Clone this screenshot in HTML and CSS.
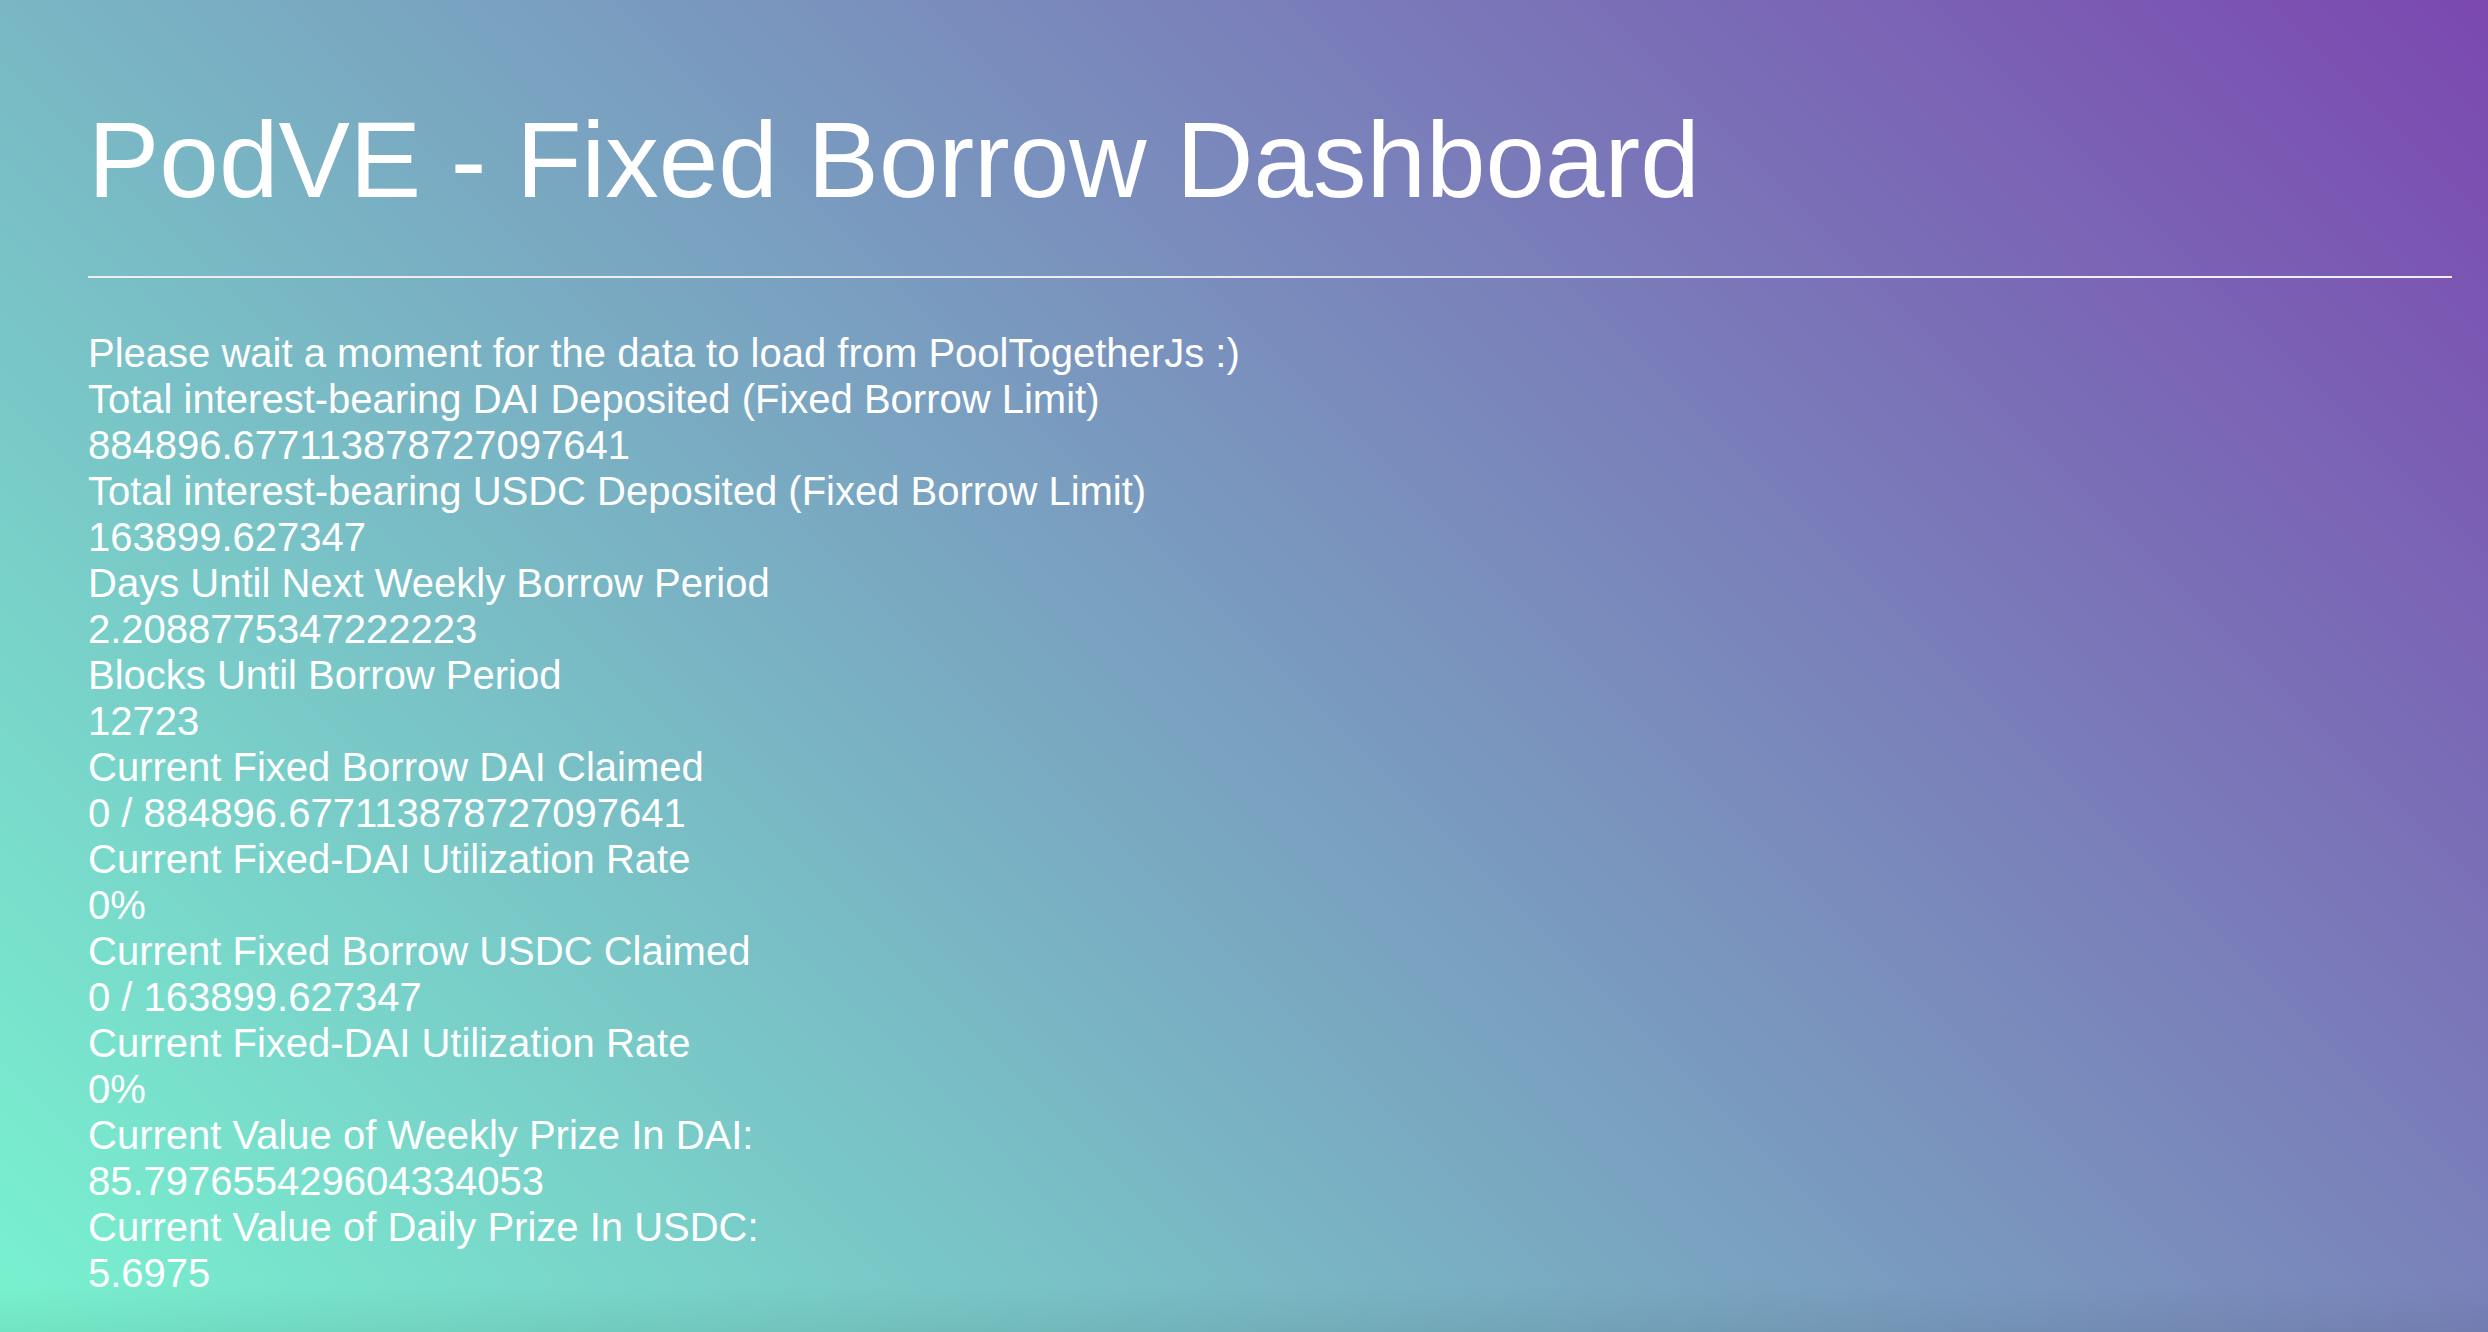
FILE: index.html
```html
<!DOCTYPE html>
<html lang="en">
<head>
<meta charset="utf-8">
<meta name="viewport" content="width=device-width, initial-scale=1">
<title>PodVE - Fixed Borrow Dashboard</title>
<link rel="stylesheet" href="styles.css">
</head>
<body>
<main class="dashboard">
<h1 class="title">PodVE - Fixed Borrow Dashboard</h1>
<hr class="divider">
<p class="notice">Please wait a moment for the data to load from PoolTogetherJs :)</p>
<dl class="stats">
<dt>Total interest-bearing DAI Deposited (Fixed Borrow Limit)</dt><dd>884896.677113878727097641</dd>
<dt>Total interest-bearing USDC Deposited (Fixed Borrow Limit)</dt><dd>163899.627347</dd>
<dt>Days Until Next Weekly Borrow Period</dt><dd>2.2088775347222223</dd>
<dt>Blocks Until Borrow Period</dt><dd>12723</dd>
<dt>Current Fixed Borrow DAI Claimed</dt><dd>0 / 884896.677113878727097641</dd>
<dt>Current Fixed-DAI Utilization Rate</dt><dd>0%</dd>
<dt>Current Fixed Borrow USDC Claimed</dt><dd>0 / 163899.627347</dd>
<dt>Current Fixed-DAI Utilization Rate</dt><dd>0%</dd>
<dt>Current Value of Weekly Prize In DAI:</dt><dd>85.797655429604334053</dd>
<dt>Current Value of Daily Prize In USDC:</dt><dd>5.6975</dd>
</dl>
</main>
</body>
</html>
```

FILE: styles.css
```css
html {
  min-height: 100%;
  background:
    linear-gradient(to top, rgba(0, 0, 0, 0.06), transparent 48px) no-repeat,
    linear-gradient(45deg, #78f3cf 0%, #7b48b0 100%) no-repeat;
}

body {
  margin: 0;
  color: #fff;
  font: 40px/46px Arial, "Liberation Sans", sans-serif;
}

.dashboard {
  padding: 96px 36px 24px 88px;
}

.title {
  margin: 0;
  font-size: 107px;
  font-weight: 400;
  line-height: 128px;
}

.divider {
  height: 2px;
  margin: 52px 0;
  border: 0;
  background: #eee;
}

.notice,
.stats,
.stats dd {
  margin: 0;
}
```
